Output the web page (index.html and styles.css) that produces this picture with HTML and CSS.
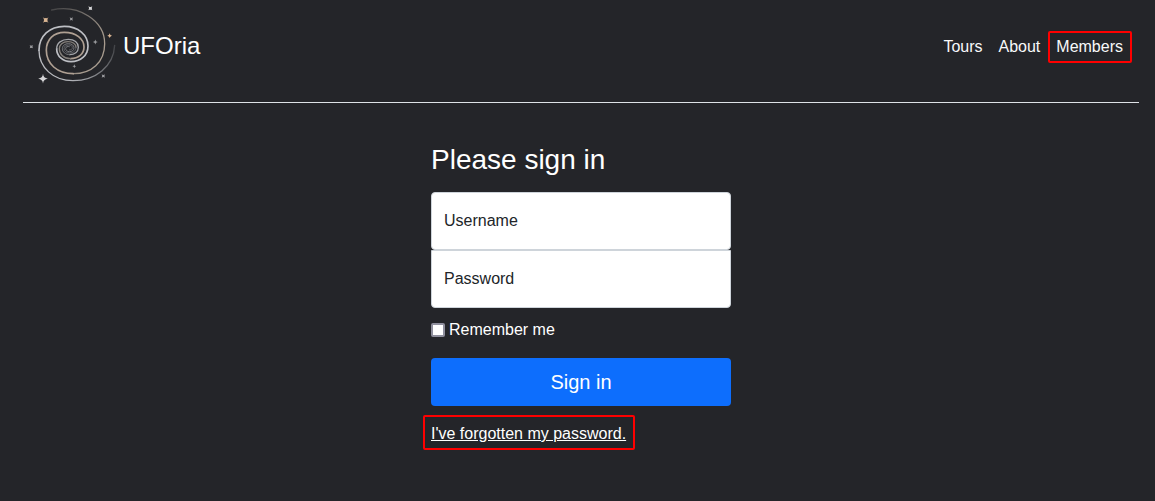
FILE: index.html
```html
<!DOCTYPE html>
<html lang="en">
<head>
<meta charset="utf-8">
<meta name="viewport" content="width=device-width, initial-scale=1">
<title>UFOria</title>
<link rel="stylesheet" href="styles.css">
</head>
<body>
<header class="site-header">
  <a class="brand" href="#">
    <svg class="brand-logo" viewBox="0 0 285 270" aria-hidden="true">
      <defs>
        <linearGradient id="outer" gradientUnits="userSpaceOnUse" x1="270" y1="135" x2="120" y2="235">
          <stop offset="0" stop-color="#b9bbbe" stop-opacity=".2"/>
          <stop offset="1" stop-color="#b9bbc0"/>
        </linearGradient>
        <linearGradient id="inner" gradientUnits="userSpaceOnUse" x1="75" y1="28" x2="235" y2="120">
          <stop offset="0" stop-color="#8d8a86" stop-opacity=".3"/>
          <stop offset="1" stop-color="#a89c8f"/>
        </linearGradient>
        <path id="star" d="M0-12Q1-1 12 0Q1 1 0 12Q-1 1-12 0Q-1-1 0-12Z"/>
      </defs>
      <g fill="none" stroke-linecap="round">
        <path stroke="url(#outer)" stroke-width="4" d="M269 136C266 200 211 242 144 242C84 242 42 202 42 151"/>
        <path stroke="#bdbfc4" stroke-width="5" d="M42 151C42 108 74 79 118 79C160 79 189 105 189 138C189 167 166 185 138 185C113 185 95 168 95 146"/>
        <path stroke="#a3a5a9" stroke-width="4" d="M95 146C95 129 110 118 130 118C148 118 160 128 160 142C160 156 149 164 134 164"/>
        <path stroke="#77797d" stroke-width="3" d="M134 164C121 164 112 156 112 146C112 137 120 131 130 131C140 131 147 136 147 143C147 151 141 155 133 155C127 155 122 151 122 145C122 141 128 138 133 140"/>
        <path stroke="url(#inner)" stroke-width="4" d="M80 30C162 12 239 62 239 131C239 187 199 221 145 221"/>
        <path stroke="#afa093" stroke-width="5" d="M145 221C96 221 64 191 64 151C64 118 87 97 118 97C153 97 177 116 177 141C177 162 160 176 137 176"/>
        <path stroke="#85807c" stroke-width="4" d="M137 176C116 176 103 162 103 146C103 134 113 125 129 125C143 125 153 132 153 142"/>
        <path stroke="#606267" stroke-width="3" d="M153 142C153 153 145 159 134 159C124 159 117 153 117 146C117 139 123 135 131 135C138 135 142 138 142 143C142 148 138 150 133 150"/>
      </g>
      <g fill="#d5d5d7">
        <use href="#star" transform="translate(54 236) scale(1.2)"/>
        <circle cx="54" cy="236" r="4"/>
        <use href="#star" transform="translate(196 25) rotate(45) scale(.7)"/>
        <circle cx="196" cy="25" r="4"/>
      </g>
      <g fill="#d9b592">
        <use href="#star" transform="translate(62 60) rotate(45) scale(1)"/>
        <circle cx="62" cy="60" r="5"/>
        <use href="#star" transform="translate(254 107) scale(.6)"/>
        <circle cx="254" cy="107" r="3"/>
      </g>
      <g fill="#98999c">
        <use href="#star" transform="translate(19 140) rotate(45) scale(.6)"/>
        <circle cx="19" cy="140" r="3"/>
        <use href="#star" transform="translate(139 57) rotate(45) scale(.6)"/>
        <use href="#star" transform="translate(211 126) scale(.6)"/>
        <circle cx="211" cy="126" r="2"/>
        <use href="#star" transform="translate(148 199) scale(.5)"/>
        <use href="#star" transform="translate(235 228) rotate(45) scale(.6)"/>
        <circle cx="235" cy="228" r="3"/>
      </g>
    </svg>
    <span class="brand-name">UFOria</span>
  </a>
  <nav class="site-nav">
    <a class="nav-link" href="#">Tours</a>
    <a class="nav-link" href="#">About</a>
    <a class="nav-link highlight" href="#">Members</a>
  </nav>
</header>
<main class="sign-in">
  <form class="sign-in-form">
    <h1 class="title">Please sign in</h1>
    <div class="field">
      <input class="field-input" type="text" id="username" autocomplete="username">
      <label class="field-label" for="username">Username</label>
    </div>
    <div class="field">
      <input class="field-input field-input-last" type="password" id="password" autocomplete="current-password">
      <label class="field-label" for="password">Password</label>
    </div>
    <div class="remember">
      <input class="check" type="checkbox" id="remember">
      <label for="remember">Remember me</label>
    </div>
    <button class="submit" type="submit">Sign in</button>
    <a class="forgot highlight" href="#">I've forgotten my password.</a>
  </form>
</main>
</body>
</html>
```
FILE: styles.css
```css
* {
  box-sizing: border-box;
}

body {
  margin: 0;
  padding: 0 16px 0 23px;
  background: #242529;
  color: #fff;
  font-family: "Liberation Sans", Arial, sans-serif;
  font-size: 16px;
  line-height: 24px;
}

.site-header {
  display: flex;
  align-items: center;
  justify-content: space-between;
  padding: 0 7px 12px 2px;
  border-bottom: 1px solid #dee2e6;
}

.brand {
  display: flex;
  align-items: center;
  gap: 3px;
  color: #fff;
  font-size: 24px;
  text-decoration: none;
}

.brand-logo {
  width: 95px;
  height: 90px;
}

.brand-name {
  padding-top: 2px;
}

.site-nav {
  display: flex;
  align-items: center;
  gap: 8px;
  padding-top: 4px;
}

.nav-link {
  padding: 2px 0 2px 8px;
  color: #f8f9fa;
  text-decoration: none;
}

.highlight {
  border: 2px solid #f00;
  border-radius: 2px;
}

.nav-link.highlight {
  padding: 2px 7px 2px 6px;
}

.sign-in {
  display: flex;
  justify-content: center;
  padding: 40px 0;
}

.sign-in-form {
  display: flex;
  flex-direction: column;
  width: 100%;
  max-width: 300px;
}

.title {
  margin: 0 0 15px;
  font-size: 28px;
  font-weight: 400;
  line-height: 34px;
}

.field {
  display: grid;
  align-items: center;
}

.field-input,
.field-label {
  grid-area: 1 / 1;
}

.field-input {
  width: 100%;
  height: 58px;
  padding: 16px 12px;
  border: 1px solid #ced4da;
  border-radius: 4px;
  background: #fff;
  color: #212529;
  font: inherit;
}

.field-input-last {
  border-top-left-radius: 0;
  border-top-right-radius: 0;
}

.field-label {
  padding: 0 13px;
  color: #212529;
  pointer-events: none;
}

.field-input:not(:focus) + .field-label {
  z-index: 1;
}

.remember {
  display: flex;
  align-items: center;
  gap: 4px;
  margin: 10px 0 16px;
}

.check {
  appearance: none;
  width: 14px;
  height: 14px;
  margin: 0;
  border: 2px solid #8f8f9d;
  border-radius: 2px;
  background: #fff;
}

.check:checked {
  background: #0d6efd;
}

.submit {
  height: 48px;
  border: 0;
  border-radius: 4px;
  background: #0d6efd;
  color: #fff;
  font: inherit;
  font-size: 20px;
}

.forgot {
  align-self: flex-start;
  margin: 9px 0 0 -8px;
  padding: 5px 7px 2px 6px;
  color: #fff;
}
```
